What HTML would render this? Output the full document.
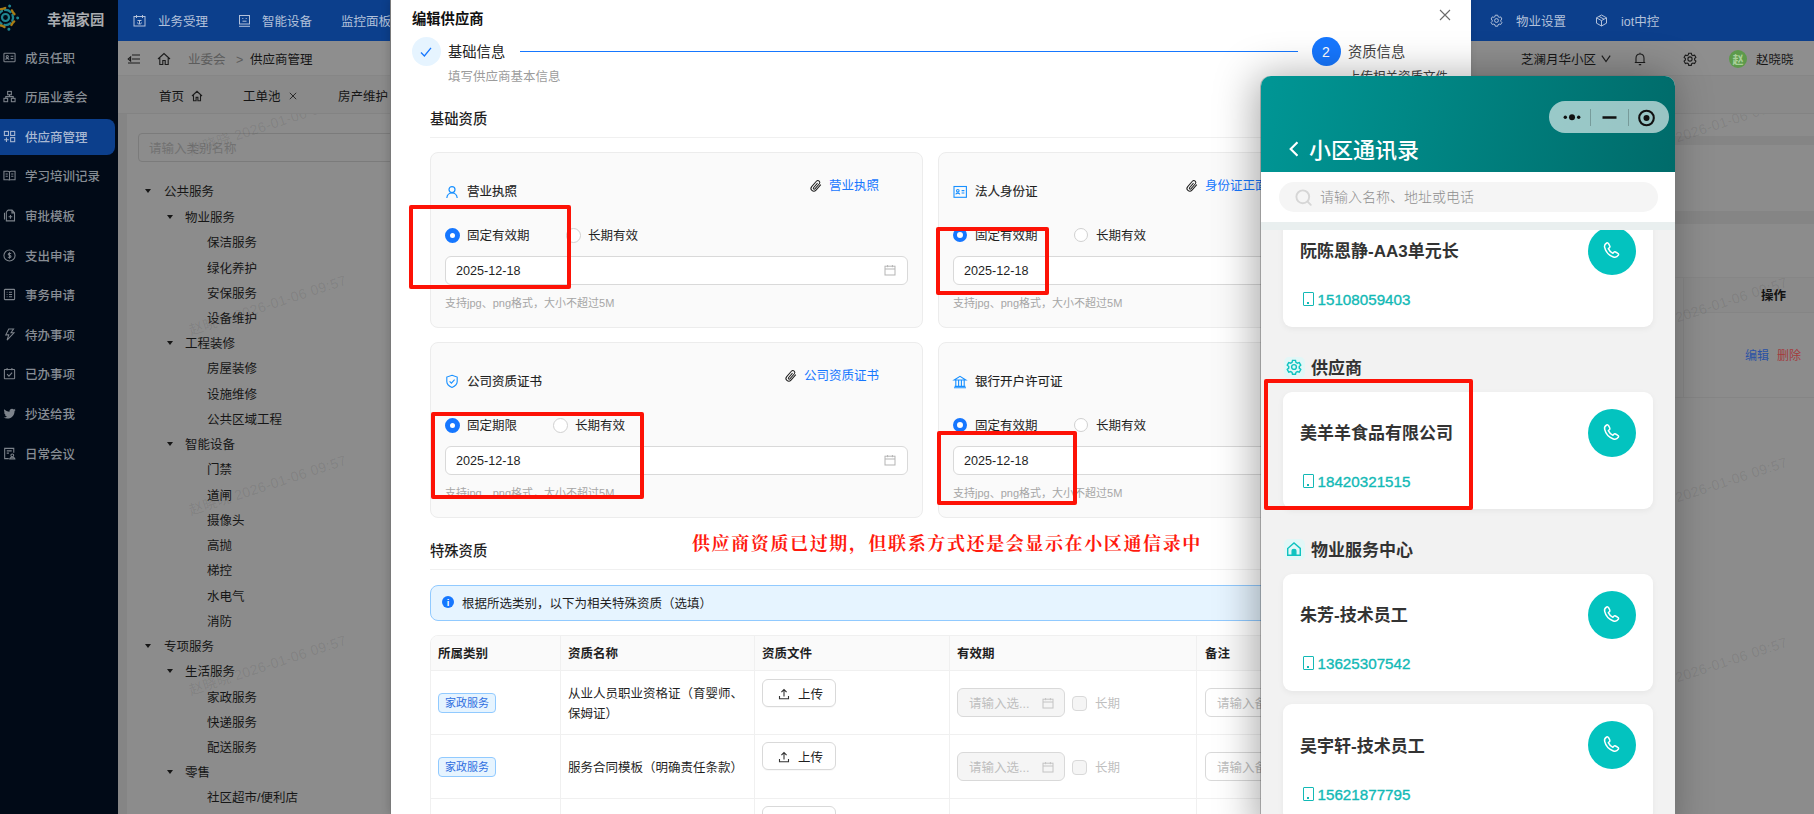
<!DOCTYPE html>
<html lang="zh-CN">
<head>
<meta charset="utf-8">
<title>供应商管理</title>
<style>
*{box-sizing:border-box;margin:0;padding:0}
html,body{width:1814px;height:814px;overflow:hidden;background:#858585}
body{font-family:"Liberation Sans","Noto Sans CJK SC",sans-serif;position:relative;color:#222}
.a{position:absolute}
.t{position:absolute;white-space:nowrap;line-height:20px;font-size:12.5px;margin-top:1px}
svg{position:absolute;overflow:visible}
/* ---------- dimmed app background ---------- */
#side{left:0;top:0;width:118px;height:814px;background:#010a17}
#side .t{left:25px;color:#878d94;font-weight:500}
#side .act{left:0;top:119px;width:115px;height:36px;background:#0c3f8c;border-radius:0 8px 8px 0}
#side svg{left:3px;width:13px;height:13px;margin-top:-.3px;fill:none;stroke:#7d838b;stroke-width:1.15}
#top{left:118px;top:0;width:1696px;height:41px;background:#0c3f8c}
#top .t{color:#b3c1da;top:11px}
#top svg{width:13px;height:13px;fill:none;stroke:#b3c1da;stroke-width:1;top:14px}
#crumb{left:118px;top:41px;width:1696px;height:35px;background:#8e8e8e;border-bottom:1px solid #868686}
#crumb svg,#tabs svg{fill:none;stroke:#1c1c1c;stroke-width:1.1}
#tabs{left:118px;top:76px;width:1696px;height:38px;background:#8a8a8a;border-bottom:1px solid #838383}
#tree{left:127px;top:122px;width:300px;height:700px;background:#8c8c8c}
#tree .t{color:#161616}
#tree i{position:absolute;width:0;height:0;border-left:3.5px solid transparent;border-right:3.5px solid transparent;border-top:4.5px solid #161616}
.dk{color:#151515}
.wm{position:absolute;white-space:nowrap;font-size:14px;line-height:16px;letter-spacing:.4px;color:rgba(0,0,0,.085);transform:rotate(-18deg);transform-origin:left bottom}
/* ---------- modal ---------- */
#modal{left:391px;top:0;width:1080px;height:814px;background:#fff;box-shadow:-1px 0 0 #7a7a7a,-2px 0 8px rgba(0,0,0,.16)}
.m{color:#1f1f1f}
.card{position:absolute;width:493px;height:176px;border:1px solid #ececec;border-radius:8px;background:#fafafa}
.card .ttl{left:36px;top:28px;font-weight:400;-webkit-text-stroke:.15px #1f1f1f;color:#1f1f1f}
.card .lnk{top:22px;color:#1677ff}
.card .rl{top:72px;color:#1f1f1f}
.rad{position:absolute;margin-top:-.5px;width:15px;height:15px;border-radius:50%;border:1px solid #d0d0d0;background:#fff}
.rad.on{border:5.2px solid #1677ff}
.c2 .rad{width:14px;height:14px;margin-top:-.2px}
.c2 .rad.on{border-width:4.8px}
.inp{position:absolute;height:29px;border:1px solid #d9d9d9;border-radius:6px;background:#fff}
.card .inp{left:14px;top:103px;width:463px}
.card .inp .t{left:10px;top:3px;color:#1f1f1f;font-size:12.6px}
.card .hint{left:14px;top:139px;font-size:11px;color:#a6a6a6}
.cal{width:12px;height:12px;fill:none;stroke:#b5b5b5;stroke-width:1}
.clip{width:12px;height:12px;fill:none;stroke:#1f1f1f;stroke-width:1}
.red{position:absolute;border:4px solid #fd1206;border-radius:2px}
.hr{position:absolute;height:1px;background:#f0f0f0}
.th{font-weight:700;color:#1f1f1f}
.tag{position:absolute;height:20px;width:58px;border:1px solid #91caff;background:#e6f4ff;border-radius:4px;color:#2f6fe0;font-size:11px;line-height:18px;text-align:center}
.btn{position:absolute;width:74px;height:28px;border:1px solid #d9d9d9;border-radius:6px;background:#fff;box-shadow:0 1px 1px rgba(0,0,0,.03)}
.btn .t{left:35px;top:4px;color:#1f1f1f}
.btn svg{left:15px;top:8px;width:12px;height:12px;fill:none;stroke:#333;stroke-width:1.1}
.dis{background:#f5f5f5}
.ph{color:#bfbfbf}
.chk{position:absolute;width:15px;height:15px;border:1px solid #d9d9d9;border-radius:4px;background:#f5f5f5}
.vl{position:absolute;width:1px;background:#f0f0f0}
/* ---------- phone panel ---------- */
#phone{left:1261px;top:76px;width:414px;height:760px;border-radius:10px 10px 0 0;overflow:hidden;background:#f2f2f2;box-shadow:-1px 0 0 rgba(0,0,0,.22),-5px 0 40px rgba(0,0,0,.34)}
#phone .hd{left:0;top:0;width:414px;height:96px;background:linear-gradient(100deg,#009695 0%,#008886 35%,#006b6a 100%)}
#phone .cap{left:288px;top:25px;width:120px;height:32px;border-radius:16px;background:rgba(255,255,255,.6)}
#phone .pc{position:absolute;left:22px;width:370px;background:#fff;border-radius:9px;box-shadow:0 2px 6px rgba(0,0,0,.05)}
#phone .nm{left:39px;font-size:17px;font-weight:700;color:#333;line-height:24px}
#phone .no{left:56.5px;font-size:15.2px;color:#12b9b6;line-height:22px;-webkit-text-stroke:.35px #12b9b6}
#phone .call{position:absolute;left:327px;width:48px;height:48px;border-radius:50%;background:#03c3bf}
#phone .call svg{left:14px;top:13.5px;width:20px;height:20px;fill:none;stroke:#fff;stroke-width:1.35;stroke-linejoin:round;stroke-linecap:round}
#phone .mob{position:absolute;left:42px;width:11px;height:14px;border:1.8px solid #12b9b6;border-radius:1px}
#phone .mob:after{content:"";position:absolute;left:2.8px;bottom:.8px;width:1.8px;height:1.8px;background:#12b9b6}
#phone .sec{left:50px;font-size:17px;font-weight:700;color:#333;line-height:24px}
#phone .sic{position:absolute;left:22.5px;width:21px;height:21px;border-radius:5px;background:#e2f7f7;margin-top:-.5px}
#phone .sic svg{left:2.5px;top:2.5px;width:16px;height:16px;fill:none;stroke:#10c3c0;stroke-width:1.25}
</style>
</head>
<body>
<!-- ================= SIDEBAR ================= -->
<div id="side" class="a">
  <div class="act a"></div>
  <svg style="left:-9px;top:3.500px;width:29px;height:29px;stroke:none" viewBox="-14.500 -14.500 29 29"><circle r="3.500" fill="none" stroke="#1f8591" stroke-width="2.200"/><g fill="none" stroke-width="2.300" stroke-linecap="round"><g stroke="#1f8591"><path d="M-3 -6.900a7.500 7.500 0 0 1 6 0" transform="rotate(20)"/><path d="M-3 -6.900a7.500 7.500 0 0 1 6 0" transform="rotate(92)"/><path d="M-3 -6.900a7.500 7.500 0 0 1 6 0" transform="rotate(164)"/><path d="M-3 -6.900a7.500 7.500 0 0 1 6 0" transform="rotate(236)"/><path d="M-3 -6.900a7.500 7.500 0 0 1 6 0" transform="rotate(308)"/></g><g stroke="#a97c14"><path d="M-2.300 -9.300a9.600 9.600 0 0 0 4.600 0" transform="rotate(56)"/><path d="M-2.300 -9.300a9.600 9.600 0 0 0 4.600 0" transform="rotate(128)"/><path d="M-2.300 -9.300a9.600 9.600 0 0 0 4.600 0" transform="rotate(200)"/><path d="M-2.300 -9.300a9.600 9.600 0 0 0 4.600 0" transform="rotate(272)"/><path d="M-2.300 -9.300a9.600 9.600 0 0 0 4.600 0" transform="rotate(344)"/></g></g><g fill="#1f8591"><circle r="1.500" cx="0" cy="-12.200" transform="rotate(20)"/><circle r="1.500" cx="0" cy="-12.200" transform="rotate(92)"/><circle r="1.500" cx="0" cy="-12.200" transform="rotate(164)"/><circle r="1.500" cx="0" cy="-12.200" transform="rotate(236)"/><circle r="1.500" cx="0" cy="-12.200" transform="rotate(308)"/></g></svg>
  <div class="t" style="left:47px;top:9px;font-size:14.300px;font-weight:700;color:#a9acb0">幸福家园</div>
  <svg viewBox="0 0 14 14" style="top:51px"><rect x="1" y="2.5" width="12" height="9" rx=".8"/><circle cx="4.6" cy="6" r="1.2"/><path d="M2.8 9.2c.3-1.4 3.3-1.4 3.6 0M8.2 5.6h3M8.2 8.2h3"/></svg>
  <div class="t" style="top:48px">成员任职</div>
  <svg viewBox="0 0 14 14" style="top:90px"><rect x="5" y="1.5" width="4" height="3.6"/><rect x="1" y="9" width="4" height="3.6"/><rect x="9" y="9" width="4" height="3.6"/><path d="M7 5.1v2M3 9V7.1h8V9"/></svg>
  <div class="t" style="top:87px">历届业委会</div>
  <svg viewBox="0 0 14 14" style="top:130px;stroke:#a9b8d2"><rect x="1.5" y="1.5" width="4.4" height="4.4"/><rect x="8.2" y="1.5" width="4.4" height="4.4"/><rect x="8.2" y="8.2" width="4.4" height="4.4"/><path d="M3.7 8v5M1.2 10.5h5"/></svg>
  <div class="t" style="top:127px;color:#a9b8d2">供应商管理</div>
  <svg viewBox="0 0 14 14" style="top:169px"><path d="M7 3.2v9M1 2.5h4.2c1 0 1.8.5 1.8 1.4 0-.9.8-1.4 1.8-1.4H13v9H8.6c-.9 0-1.6.3-1.6.9 0-.6-.7-.9-1.6-.9H1zM2.8 5.4h2.4M2.8 7.8h2.4M8.8 5.4h2.4M8.8 7.8h2.4"/></svg>
  <div class="t" style="top:166px">学习培训记录</div>
  <svg viewBox="0 0 14 14" style="top:209px"><path d="M5.2 1.2h4.6L12.4 4v8.8H3.6V3.2M5.2 1.2L3.6 3.2M9.6 1.4v2.8h2.6M8 6.4v4M6 8.4h4M1.6 4v7.4"/></svg>
  <div class="t" style="top:206px">审批模板</div>
  <svg viewBox="0 0 14 14" style="top:249px"><circle cx="7" cy="7" r="6"/><path d="M8.6 5.2c-.3-.8-2.9-1-3 .4-.1 1.500 3 .9 3 2.500 0 1.500-2.900 1.300-3.200.3M7 3.400v7.200"/></svg>
  <div class="t" style="top:246px">支出申请</div>
  <svg viewBox="0 0 14 14" style="top:288px"><rect x="1.5" y="1.5" width="11" height="11" rx=".6"/><path d="M6.400 4.600h3.400M6.400 7h3.400M6.400 9.400h3.400M4 4.600h.8M4 7h.8M4 9.400h.8"/></svg>
  <div class="t" style="top:285px">事务申请</div>
  <svg viewBox="0 0 14 14" style="top:328px"><path d="M6.200 1h5.200L8.600 5.200h3.200L4.400 13l1.800-5.600H3z"/></svg>
  <div class="t" style="top:325px">待办事项</div>
  <svg viewBox="0 0 14 14" style="top:367px"><rect x="1.500" y="2.600" width="11" height="10" rx=".6"/><path d="M4.400 1v2.600M9.600 1v2.600M4.400 7.800l2 2 3.400-3.800"/></svg>
  <div class="t" style="top:364px">已办事项</div>
  <svg viewBox="0 0 14 14" style="top:407px;stroke:none;fill:#7d838b"><path d="M13.600 3c-.500.200-1 .400-1.500.400.600-.300 1-.800 1.200-1.400-.500.300-1.100.500-1.700.600C11.100 2.100 10.400 1.800 9.700 1.800c-1.500 0-2.700 1.200-2.700 2.700 0 .200 0 .400.100.600C4.800 5 2.800 3.900 1.500 2.300c-.200.400-.400.900-.400 1.400 0 .900.500 1.800 1.200 2.200-.400 0-.900-.100-1.200-.300 0 1.300.900 2.400 2.200 2.700-.400.100-.800.100-1.200 0 .300 1.100 1.300 1.900 2.500 1.900-1.100.900-2.600 1.300-4 1.100 1.200.800 2.600 1.200 4.100 1.200 5 0 7.700-4.100 7.700-7.700v-.300c.500-.400 1-.900 1.200-1.500z"/></svg>
  <div class="t" style="top:404px">抄送给我</div>
  <svg viewBox="0 0 14 14" style="top:447px"><path d="M11.6 6.200V1.500H1.800v11h4.400M4 4.200h5.400M4 6.600h2.400"/><circle cx="10" cy="9" r="1.500"/><path d="M7.200 12.800c.300-2.400 5.300-2.400 5.600 0z"/></svg>
  <div class="t" style="top:444px">日常会议</div>
</div>
<!-- ================= TOP BAR ================= -->
<div id="top" class="a">
  <svg viewBox="0 0 13 13" style="left:15px"><rect x="1" y="2.500" width="11" height="9.500"/><path d="M3.500 1v3M9.500 1v3M4.500 6.500h4M6.500 6.500v3.500M4.500 8.500c0 1 .500 1.500 2 1.500s2-.500 2-1.500"/></svg>
  <div class="t" style="left:40px">业务受理</div>
  <svg viewBox="0 0 13 13" style="left:120px"><rect x="1.500" y="1.500" width="10" height="8.500"/><path d="M4.300 4.500h1M7.700 4.500h1M4.500 7.200h4M1 12.300h11"/></svg>
  <div class="t" style="left:144px">智能设备</div>
  <div class="t" style="left:223px">监控面板</div>
  <svg viewBox="0 0 13 13" style="left:1372px"><circle cx="6.500" cy="6.500" r="1.900"/><path d="M5.300 1.200h2.400l.4 1.500 1.100.600 1.500-.400 1.200 2.100-1.100 1.100v1.200l1.100 1.100-1.200 2.100-1.500-.400-1.100.600-.4 1.500H5.300l-.4-1.500-1.100-.600-1.500.400-1.200-2.100 1.100-1.100V6.100L1.100 5l1.200-2.100 1.500.400 1.100-.600z"/></svg>
  <div class="t" style="left:1398px">物业设置</div>
  <svg viewBox="0 0 13 13" style="left:1477px"><path d="M6.500 1l5 2.800v5.400l-5 2.800-5-2.800V3.800zM1.500 3.800l5 2.800 5-2.800M6.500 6.600V12M4 2.400l5 2.800"/></svg>
  <div class="t" style="left:1503px">iot中控</div>
</div>
<div id="crumb" class="a">
  <svg viewBox="0 0 14 14" style="left:9px;top:11px;width:14px;height:14px"><path d="M5 3h8M5 7h8M1 11h12M3.600 5L1.200 7l2.400 2z" /></svg>
  <svg viewBox="0 0 14 14" style="left:39px;top:11px;width:14px;height:14px"><path d="M1 7l6-5.500L13 7M2.800 6v6.500h3v-4h2.400v4h3V6"/></svg>
  <div class="t" style="left:70px;top:8px;color:#5c5c5c">业委会</div>
  <div class="t" style="left:118px;top:8px;color:#5c5c5c">&gt;</div>
  <div class="t dk" style="left:132px;top:8px">供应商管理</div>
  <div class="t dk" style="left:1403px;top:8px">芝澜月华小区</div>
  <svg viewBox="0 0 12 12" style="left:1482px;top:13px;width:12px;height:10px;stroke-width:1.4"><path d="M1 2l5 7 5-7"/></svg>
  <svg viewBox="0 0 14 14" style="left:1515px;top:11px;width:14px;height:14px"><path d="M3 10.500V6.200C3 3.800 4.700 2 7 2s4 1.800 4 4.200v4.300M1.800 10.500h10.400M5.800 12.600h2.400M7 2V.8"/></svg>
  <svg viewBox="0 0 14 14" style="left:1565px;top:11px;width:14px;height:14px"><circle cx="7" cy="7" r="2.100"/><path d="M5.700 1.200h2.600l.4 1.700 1.200.700 1.700-.500 1.300 2.300-1.300 1.200v1.400l1.300 1.200-1.300 2.300-1.700-.500-1.200.700-.4 1.700H5.700l-.4-1.700-1.200-.700-1.700.500-1.300-2.300 1.300-1.200V6.600L1.100 5.400l1.300-2.300 1.700.500 1.200-.700z"/></svg>
  <div class="a" style="left:1611px;top:9px;width:18px;height:18px;border-radius:50%;background:#5d9a4b"></div>
  <div class="t" style="left:1615px;top:8px;font-size:11px;font-weight:700;color:#a9d09a;margin-left:-.5px">赵</div>
  <div class="t dk" style="left:1638px;top:8px">赵晓晓</div>
</div>
<div id="tabs" class="a">
  <div class="t dk" style="left:41px;top:10px">首页</div>
  <svg viewBox="0 0 12 12" style="left:73px;top:14px;width:12px;height:12px"><path d="M1 6l5-4.700L11 6M2.500 5.200v5.600h2.600V7.400h1.800v3.400h2.600V5.200"/></svg>
  <div class="t dk" style="left:125px;top:10px">工单池</div>
  <svg viewBox="0 0 10 10" style="left:171px;top:16px;width:8px;height:8px"><path d="M1 1l8 8M9 1L1 9"/></svg>
  <div class="t dk" style="left:220px;top:10px">房产维护</div>
</div>
<!-- right-side dim content -->
<div class="a" style="left:1674px;top:114px;width:140px;height:22px;background:#8c8c8c"></div>
<div class="a" style="left:1674px;top:145px;width:140px;height:66px;background:#8c8c8c"></div>
<div class="a" style="left:1674px;top:223.500px;width:140px;height:600px;background:#8c8c8c"></div>
<div class="a" style="left:1674px;top:277px;width:140px;height:1px;background:#868686"></div>
<div class="a" style="left:1683px;top:278px;width:131px;height:35px;background:#8a8a8a;border-bottom:1px solid #858585;border-left:1px solid #858585"></div>
<div class="a" style="left:1683px;top:313px;width:1px;height:84px;background:#858585"></div>
<div class="a" style="left:1674px;top:397px;width:140px;height:1px;background:#858585"></div>
<div class="t" style="left:1761px;top:285px;font-weight:700;color:#131313">操作</div>
<div class="t" style="left:1745px;top:345px;font-size:12px;color:#2a52a5">编辑</div>
<div class="t" style="left:1777px;top:345px;font-size:12px;color:#a53a3c">删除</div>
<div class="a" style="left:127px;top:114px;width:300px;height:10px;background:#8c8c8c;border-bottom:1px solid #868686"></div>
<div id="tree" class="a">
  <div class="a" style="left:11px;top:11px;width:300px;height:29px;border:1px solid #7b7b7b;border-radius:4px"><div class="t" style="left:10px;top:4px;color:#727272">请输入类别名称</div></div>
  <i style="left:18px;top:67px"></i>
  <div class="t" style="left:37px;top:58.8px">公共服务</div>
  <i style="left:40px;top:93.0px"></i>
  <div class="t" style="left:58px;top:85.0px">物业服务</div>
  <div class="t" style="left:80px;top:110.3px">保洁服务</div>
  <div class="t" style="left:80px;top:135.5px">绿化养护</div>
  <div class="t" style="left:80px;top:160.7px">安保服务</div>
  <div class="t" style="left:80px;top:186.0px">设备维护</div>
  <i style="left:40px;top:219.2px"></i>
  <div class="t" style="left:58px;top:211.2px">工程装修</div>
  <div class="t" style="left:80px;top:236.4px">房屋装修</div>
  <div class="t" style="left:80px;top:261.7px">设施维修</div>
  <div class="t" style="left:80px;top:286.9px">公共区域工程</div>
  <i style="left:40px;top:320.1px"></i>
  <div class="t" style="left:58px;top:312.1px">智能设备</div>
  <div class="t" style="left:80px;top:337.4px">门禁</div>
  <div class="t" style="left:80px;top:362.6px">道闸</div>
  <div class="t" style="left:80px;top:387.9px">摄像头</div>
  <div class="t" style="left:80px;top:413.1px">高抛</div>
  <div class="t" style="left:80px;top:438.3px">梯控</div>
  <div class="t" style="left:80px;top:463.6px">水电气</div>
  <div class="t" style="left:80px;top:488.8px">消防</div>
  <i style="left:18px;top:522.0px"></i>
  <div class="t" style="left:37px;top:514.0px">专项服务</div>
  <i style="left:40px;top:547.3px"></i>
  <div class="t" style="left:58px;top:539.3px">生活服务</div>
  <div class="t" style="left:80px;top:564.5px">家政服务</div>
  <div class="t" style="left:80px;top:589.7px">快递服务</div>
  <div class="t" style="left:80px;top:615.0px">配送服务</div>
  <i style="left:40px;top:648.2px"></i>
  <div class="t" style="left:58px;top:640.2px">零售</div>
  <div class="t" style="left:80px;top:665.4px">社区超市/便利店</div>
</div>
<!-- watermarks (behind modal) -->
<div class="a" style="left:118px;top:114px;width:1696px;height:700px;overflow:hidden">
  <div class="wm" style="left:73.5px;top:28px">赵晓晓 2026-01-06 09:57</div>
  <div class="wm" style="left:73.5px;top:208px">赵晓晓 2026-01-06 09:57</div>
  <div class="wm" style="left:73.5px;top:388px">赵晓晓 2026-01-06 09:57</div>
  <div class="wm" style="left:73.5px;top:568px">赵晓晓 2026-01-06 09:57</div>
  <div class="wm" style="left:1514.5px;top:30px">赵晓晓 2026-01-06 09:57</div>
  <div class="wm" style="left:1514.5px;top:210px">赵晓晓 2026-01-06 09:57</div>
  <div class="wm" style="left:1514.5px;top:390px">赵晓晓 2026-01-06 09:57</div>
  <div class="wm" style="left:1514.5px;top:570px">赵晓晓 2026-01-06 09:57</div>
</div>
<!-- ================= MODAL ================= -->
<div id="modal" class="a"></div>
<div class="t m" style="left:412px;top:8px;font-size:14.300px;font-weight:700;color:#111">编辑供应商</div>
<svg viewBox="0 0 12 12" style="left:1439px;top:9px;width:12px;height:12px;fill:none;stroke:#6b6b6b;stroke-width:1.100"><path d="M1 1l10 10M11 1L1 11"/></svg>
<!-- steps -->
<div class="a" style="left:412px;top:37px;width:29px;height:29px;border-radius:50%;background:#e6f4ff"></div>
<svg viewBox="0 0 12 12" style="left:420px;top:46px;width:12px;height:12px;fill:none;stroke:#1677ff;stroke-width:1.300"><path d="M1 6.500l3.400 3.500L11 1.800"/></svg>
<div class="t m" style="left:448px;top:41px;font-size:14.300px;color:#222">基础信息</div>
<div class="a" style="left:520px;top:51px;width:778px;height:1px;background:#1677ff"></div>
<div class="t" style="left:448px;top:66px;font-size:12.500px;color:#9c9c9c">填写供应商基本信息</div>
<div class="a" style="left:1312px;top:37px;width:29px;height:29px;border-radius:50%;background:#1677ff"></div>
<div class="t" style="left:1322px;top:41px;font-size:14px;color:#fff">2</div>
<div class="t m" style="left:1348px;top:41px;font-size:14.300px;color:#444">资质信息</div>
<div class="t" style="left:1348px;top:66px;font-size:12.500px;color:#444">上传相关资质文件</div>
<!-- section 1 -->
<div class="t m" style="left:430px;top:108px;font-size:14.300px;font-weight:500">基础资质</div>
<div class="hr" style="left:430px;top:137px;width:1000px"></div>
<!-- card 1 -->
<div class="card" style="left:430px;top:152px">
  <svg viewBox="0 0 14 14" style="left:14px;top:32px;width:14px;height:14px;fill:none;stroke:#1890ff;stroke-width:1.200"><circle cx="7" cy="4.600" r="3"/><path d="M1.800 13c.400-3.400 2.700-5 5.200-5s4.800 1.600 5.200 5"/></svg>
  <div class="t ttl">营业执照</div>
  <svg class="clip" viewBox="0 0 12 12" style="left:379px;top:27px"><path d="M10.900 4.900L5.700 10.100c-1.200 1.200-3 1.200-4.100.1-1.100-1.100-1-2.800.1-3.900l5-5c.8-.8 2-.8 2.800 0 .8.800.7 1.900 0 2.700L4.700 8.800c-.4.400-1 .4-1.300 0-.4-.4-.3-.9 0-1.300l4.300-4.300" transform="rotate(-4 6 6)"/></svg>
  <div class="t lnk" style="left:398px">营业执照</div>
  <div class="rad on" style="left:14px;top:75px"></div>
  <div class="t rl" style="left:36px">固定有效期</div>
  <div class="rad" style="left:135px;top:75px"></div>
  <div class="t rl" style="left:157px">长期有效</div>
  <div class="inp"><div class="t">2025-12-18</div><svg class="cal" viewBox="0 0 12 12" style="left:438px;top:7px"><rect x="1" y="2.200" width="10" height="8.800"/><path d="M1 5h10M3.600 1v2.200M8.400 1v2.200"/></svg></div>
  <div class="t hint">支持jpg、png格式，大小不超过5M</div>
</div>
<!-- card 2 -->
<div class="card c2" style="left:938px;top:152px">
  <svg viewBox="0 0 14 14" style="left:14px;top:32px;width:14px;height:14px;fill:none;stroke:#1890ff;stroke-width:1.100"><rect x="1" y="1.500" width="12.400" height="10.800"/><circle cx="4.800" cy="5.800" r="1.300"/><path d="M2.800 9.400c.300-1.700 3.700-1.700 4 0M8.600 5.600h2.800M8.600 8h2.800"/></svg>
  <div class="t ttl">法人身份证</div>
  <svg class="clip" viewBox="0 0 12 12" style="left:247px;top:27px"><path d="M10.900 4.900L5.700 10.100c-1.200 1.200-3 1.200-4.100.1-1.100-1.100-1-2.800.1-3.900l5-5c.8-.8 2-.8 2.800 0 .8.800.7 1.900 0 2.700L4.700 8.800c-.4.400-1 .4-1.300 0-.4-.4-.3-.9 0-1.300l4.300-4.300" transform="rotate(-4 6 6)"/></svg>
  <div class="t lnk" style="left:266px">身份证正面</div>
  <div class="rad on" style="left:14px;top:75px"></div>
  <div class="t rl" style="left:36px">固定有效期</div>
  <div class="rad" style="left:135px;top:75px"></div>
  <div class="t rl" style="left:157px">长期有效</div>
  <div class="inp"><div class="t">2025-12-18</div></div>
  <div class="t hint">支持jpg、png格式，大小不超过5M</div>
</div>
<!-- card 3 -->
<div class="card" style="left:430px;top:342px">
  <svg viewBox="0 0 14 14" style="left:14px;top:31px;width:14px;height:14.600px;fill:none;stroke:#1890ff;stroke-width:1.100"><path d="M7 1l5.200 1.800v4.400c0 3-2.400 4.800-5.200 6-2.800-1.200-5.200-3-5.200-6V2.800z"/><path d="M4.600 7l1.800 1.800L9.600 5.400"/></svg>
  <div class="t ttl">公司资质证书</div>
  <svg class="clip" viewBox="0 0 12 12" style="left:354px;top:27px"><path d="M10.900 4.900L5.700 10.100c-1.200 1.200-3 1.200-4.100.1-1.100-1.100-1-2.800.1-3.900l5-5c.8-.8 2-.8 2.800 0 .8.800.7 1.900 0 2.700L4.700 8.800c-.4.400-1 .4-1.300 0-.4-.4-.3-.9 0-1.300l4.300-4.300" transform="rotate(-4 6 6)"/></svg>
  <div class="t lnk" style="left:373px">公司资质证书</div>
  <div class="rad on" style="left:14px;top:75px"></div>
  <div class="t rl" style="left:36px">固定期限</div>
  <div class="rad" style="left:122px;top:75px"></div>
  <div class="t rl" style="left:144px">长期有效</div>
  <div class="inp"><div class="t">2025-12-18</div><svg class="cal" viewBox="0 0 12 12" style="left:438px;top:7px"><rect x="1" y="2.200" width="10" height="8.800"/><path d="M1 5h10M3.600 1v2.200M8.400 1v2.200"/></svg></div>
  <div class="t hint">支持jpg、png格式，大小不超过5M</div>
</div>
<!-- card 4 -->
<div class="card c2" style="left:938px;top:342px">
  <svg viewBox="0 0 14 14" style="left:14px;top:32px;width:14px;height:14px;fill:none;stroke:#1890ff;stroke-width:1.100"><path d="M1.200 5L7 1.400 12.800 5zM1 12.800h12M2.800 5.400v6M5.600 5.400v6M8.400 5.400v6M11.200 5.400v6M1.600 11.400h10.800"/></svg>
  <div class="t ttl">银行开户许可证</div>
  <div class="rad on" style="left:14px;top:75px"></div>
  <div class="t rl" style="left:36px">固定有效期</div>
  <div class="rad" style="left:135px;top:75px"></div>
  <div class="t rl" style="left:157px">长期有效</div>
  <div class="inp"><div class="t">2025-12-18</div></div>
  <div class="t hint">支持jpg、png格式，大小不超过5M</div>
</div>
<!-- section 2 -->
<div class="t m" style="left:430px;top:540px;font-size:14.300px;font-weight:500">特殊资质</div>
<div class="hr" style="left:430px;top:569px;width:1000px"></div>
<div class="a" style="left:430px;top:585px;width:1000px;height:36px;border:1px solid #91caff;background:#e6f4ff;border-radius:8px"></div>
<div class="a" style="left:442px;top:596px;width:12px;height:12px;border-radius:50%;background:#1677ff"></div>
<div class="t" style="left:446.700px;top:592px;font-size:9.500px;font-weight:700;color:#fff">i</div>
<div class="t m" style="left:462px;top:593px">根据所选类别，以下为相关特殊资质（选填）</div>
<!-- table -->
<div class="a" style="left:430px;top:635px;width:1000px;height:200px;border:1px solid #f0f0f0;border-radius:8px 8px 0 0;background:#fff"></div>
<div class="a" style="left:431px;top:636px;width:998px;height:34px;background:#fafafa;border-radius:7px 7px 0 0"></div>
<div class="hr" style="left:430px;top:670px;width:1000px"></div>
<div class="hr" style="left:430px;top:734px;width:1000px"></div>
<div class="hr" style="left:430px;top:798px;width:1000px"></div>
<div class="vl" style="left:560px;top:636px;height:180px"></div>
<div class="vl" style="left:754px;top:636px;height:180px"></div>
<div class="vl" style="left:949px;top:636px;height:180px"></div>
<div class="vl" style="left:1196px;top:636px;height:180px"></div>
<div class="t th" style="left:438px;top:643px">所属类别</div>
<div class="t th" style="left:568px;top:643px">资质名称</div>
<div class="t th" style="left:762px;top:643px">资质文件</div>
<div class="t th" style="left:957px;top:643px">有效期</div>
<div class="t th" style="left:1205px;top:643px">备注</div>
<!-- row 1 -->
<div class="tag" style="left:438px;top:693px">家政服务</div>
<div class="t m" style="left:568px;top:683px">从业人员职业资格证（育婴师、</div>
<div class="t m" style="left:568px;top:703px">保姆证）</div>
<div class="btn" style="left:762px;top:679px"><svg viewBox="0 0 12 12"><path d="M6 8.500V1.800M3.400 4.200L6 1.600l2.600 2.600M1.500 8v2.800h9V8"/></svg><div class="t">上传</div></div>
<div class="inp dis" style="left:957px;top:688px;width:108px"><div class="t ph" style="left:11px;top:4px">请输入选...</div><svg class="cal" viewBox="0 0 12 12" style="left:84px;top:8px;stroke:#c4c4c4"><rect x="1" y="2.200" width="10" height="8.800"/><path d="M1 5h10M3.600 1v2.200M8.400 1v2.200"/></svg></div>
<div class="chk" style="left:1072px;top:696px"></div>
<div class="t ph" style="left:1095px;top:693px">长期</div>
<div class="inp" style="left:1205px;top:688px;width:160px"><div class="t ph" style="left:11px;top:4px">请输入备注</div></div>
<!-- row 2 -->
<div class="tag" style="left:438px;top:757px">家政服务</div>
<div class="t m" style="left:568px;top:757px">服务合同模板（明确责任条款）</div>
<div class="btn" style="left:762px;top:742px"><svg viewBox="0 0 12 12"><path d="M6 8.500V1.800M3.400 4.200L6 1.600l2.600 2.600M1.500 8v2.800h9V8"/></svg><div class="t">上传</div></div>
<div class="inp dis" style="left:957px;top:752px;width:108px"><div class="t ph" style="left:11px;top:4px">请输入选...</div><svg class="cal" viewBox="0 0 12 12" style="left:84px;top:8px;stroke:#c4c4c4"><rect x="1" y="2.200" width="10" height="8.800"/><path d="M1 5h10M3.600 1v2.200M8.400 1v2.200"/></svg></div>
<div class="chk" style="left:1072px;top:760px"></div>
<div class="t ph" style="left:1095px;top:757px">长期</div>
<div class="inp" style="left:1205px;top:752px;width:160px"><div class="t ph" style="left:11px;top:4px">请输入备注</div></div>
<!-- row 3 -->
<div class="btn" style="left:762px;top:806px"></div>
<!-- annotation text -->
<div class="t" style="left:692px;top:531px;font-family:'Liberation Serif','Noto Serif CJK SC',serif;font-weight:700;font-size:18px;line-height:24px;letter-spacing:1.61px;color:#ff1a0e">供应商资质已过期，但联系方式还是会显示在小区通信录中</div>
<!-- ================= PHONE PANEL ================= -->
<div id="phone" class="a">
  <div class="hd a"></div>
  <div class="cap a"></div>
  <svg viewBox="0 0 121 33" style="left:288px;top:25px;width:121px;height:33px"><g fill="#111"><circle cx="16.300" cy="16.300" r="1.700"/><circle cx="23" cy="16.300" r="3"/><circle cx="29.700" cy="16.300" r="1.700"/></g><path d="M41.500 8v17M79.500 8v17" stroke="rgba(0,0,0,.22)" stroke-width="1"/><path d="M53.500 16.500h14" stroke="#111" stroke-width="2.600"/><circle cx="97.500" cy="17" r="7.300" fill="none" stroke="#111" stroke-width="2.100"/><circle cx="97.500" cy="17" r="3" fill="#111"/></svg>
  <svg viewBox="0 0 10 16" style="left:28px;top:64.500px;width:10px;height:16px;fill:none;stroke:#fff;stroke-width:2.200"><path d="M8.500 1.200L1.700 8l6.800 6.800"/></svg>
  <div class="t" style="left:48px;top:58px;font-size:22px;font-weight:500;line-height:32px;color:#fff">小区通讯录</div>
  <!-- card 1 (partly scrolled under search) -->
  <div class="pc" style="top:133px;height:118px"></div>
  <div class="call" style="top:151px"><svg viewBox="0 0 18 18"><path d="M4.200 1.800c.600-.300 1.400-.100 1.700.500l1.100 2.200c.300.600.100 1.200-.400 1.600l-.900.700c.900 1.900 2.200 3.400 4.100 4.300l.800-.900c.400-.500 1.100-.600 1.600-.300l2.100 1.200c.600.300.800 1.100.400 1.700-1 1.600-2.600 2.300-4.500 1.600C6.300 13 3.300 9.500 2.400 5.800c-.400-1.700.300-3.200 1.800-4z"/></svg></div>
  <div class="t nm" style="top:163px">阮陈恩静-AA3单元长</div>
  <div class="mob" style="top:216px"></div>
  <div class="t no" style="top:212px">15108059403</div>
  <!-- search -->
  <div class="a" style="left:0;top:96px;width:414px;height:50px;background:#fff"></div>
  <div class="a" style="left:0;top:146px;width:414px;height:7.500px;background:#e9efef"></div>
  <div class="a" style="left:18px;top:106px;width:379px;height:30px;border-radius:15px;background:#f5f5f5"></div>
  <svg viewBox="0 0 17 17" style="left:33.500px;top:112.500px;width:17px;height:17px;fill:none;stroke:#d6d6d6;stroke-width:1.900;stroke-linecap:round"><circle cx="7.800" cy="7.800" r="6.400"/><path d="M12.600 12.600l3.200 3.200"/></svg>
  <div class="t" style="left:59px;top:110px;font-size:14px;font-weight:300;color:#8f8f8f">请输入名称、地址或电话</div>
  <!-- section 供应商 -->
  <div class="sic" style="top:281px"><svg viewBox="0 0 14 14"><circle cx="7" cy="7" r="2.100"/><path d="M5.700 1.200h2.600l.4 1.700 1.200.700 1.700-.500 1.300 2.300-1.300 1.200v1.400l1.300 1.200-1.300 2.300-1.700-.500-1.200.700-.4 1.700H5.700l-.4-1.700-1.200-.700-1.700.500-1.300-2.300 1.300-1.200V6.600L1.100 5.400l1.300-2.300 1.700.500 1.200-.700z"/></svg></div>
  <div class="t sec" style="top:280px">供应商</div>
  <!-- card 2 -->
  <div class="pc" style="top:316px;height:117px"></div>
  <div class="call" style="top:333px"><svg viewBox="0 0 18 18"><path d="M4.200 1.800c.600-.300 1.400-.100 1.700.500l1.100 2.200c.300.600.100 1.200-.400 1.600l-.900.700c.900 1.900 2.200 3.400 4.100 4.300l.800-.900c.400-.500 1.100-.600 1.600-.300l2.100 1.200c.600.300.800 1.100.400 1.700-1 1.600-2.600 2.300-4.500 1.600C6.300 13 3.300 9.500 2.400 5.800c-.400-1.700.300-3.200 1.800-4z"/></svg></div>
  <div class="t nm" style="top:345px">美羊羊食品有限公司</div>
  <div class="mob" style="top:398px"></div>
  <div class="t no" style="top:394px">18420321515</div>
  <!-- section 物业服务中心 -->
  <div class="sic" style="top:463px"><svg viewBox="0 0 14 14"><path d="M1.500 6.500L7 1.800l5.500 4.700v6H1.500z"/><path d="M5.400 12.500V8.800c0-2 3.200-2 3.200 0v3.700" fill="#10c3c0"/></svg></div>
  <div class="t sec" style="top:462px">物业服务中心</div>
  <!-- card 3 -->
  <div class="pc" style="top:498px;height:117px"></div>
  <div class="call" style="top:515px"><svg viewBox="0 0 18 18"><path d="M4.200 1.800c.600-.300 1.400-.100 1.700.500l1.100 2.200c.300.600.100 1.200-.400 1.600l-.900.700c.900 1.900 2.200 3.400 4.100 4.300l.800-.900c.400-.500 1.100-.600 1.600-.300l2.100 1.200c.600.300.800 1.100.400 1.700-1 1.600-2.600 2.300-4.500 1.600C6.300 13 3.300 9.500 2.400 5.800c-.400-1.700.300-3.200 1.800-4z"/></svg></div>
  <div class="t nm" style="top:527px">朱芳-技术员工</div>
  <div class="mob" style="top:580px"></div>
  <div class="t no" style="top:576px">13625307542</div>
  <!-- card 4 -->
  <div class="pc" style="top:628px;height:117px"></div>
  <div class="call" style="top:645px"><svg viewBox="0 0 18 18"><path d="M4.200 1.800c.600-.300 1.400-.100 1.700.500l1.100 2.200c.300.600.100 1.200-.400 1.600l-.900.700c.900 1.900 2.200 3.400 4.100 4.300l.800-.900c.400-.500 1.100-.600 1.600-.300l2.100 1.200c.600.300.800 1.100.400 1.700-1 1.600-2.600 2.300-4.500 1.600C6.300 13 3.300 9.500 2.400 5.800c-.400-1.700.300-3.200 1.800-4z"/></svg></div>
  <div class="t nm" style="top:658px">吴宇轩-技术员工</div>
  <div class="mob" style="top:711px"></div>
  <div class="t no" style="top:707px">15621877795</div>
</div>
<!-- ================= RED ANNOTATION BOXES ================= -->
<div class="red" style="left:409px;top:205px;width:162px;height:83.5px"></div>
<div class="red" style="left:936px;top:227px;width:113px;height:67.5px"></div>
<div class="red" style="left:431px;top:412px;width:213px;height:87px"></div>
<div class="red" style="left:937px;top:431px;width:140px;height:74px"></div>
<div class="red" style="left:1264px;top:379px;width:209px;height:131px"></div>
</body>
</html>
